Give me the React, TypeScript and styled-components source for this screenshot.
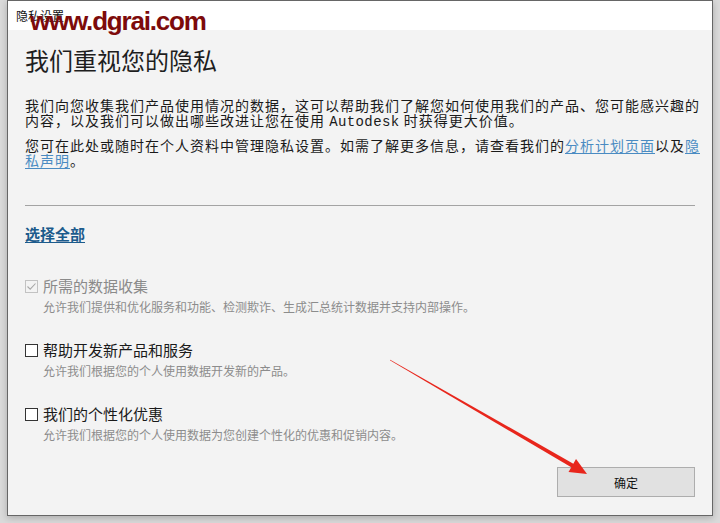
import React from "react";
import styled, { createGlobalStyle } from "styled-components";

const GlobalStyle = createGlobalStyle`
  html, body {
    margin: 0;
    padding: 0;
    background: #dadada;
    width: 720px;
    height: 523px;
    overflow: hidden;
  }
  body {
    font-family: "Noto Sans CJK SC", "Noto Sans", sans-serif;
  }
`;

const Page = styled.div`
  position: relative;
  width: 720px;
  height: 523px;
`;

const Window = styled.div`
  margin-left: 7px;
  width: 706px;
  height: 516px;
  box-sizing: border-box;
  border: 1px solid #666666;
  background: #f3f3f3;
  box-shadow: 0 2px 7px rgba(0, 0, 0, 0.22);
  display: flex;
  flex-direction: column;
`;

const TitleBar = styled.div`
  height: 29px;
  background: #ffffff;
  display: flex;
  align-items: center;
  padding-left: 8px;
  font-size: 12px;
  color: #111;
  line-height: 1;
`;

const Content = styled.div`
  flex: 1;
  display: flex;
  flex-direction: column;
  padding: 15px 17px 18px 17px;
`;

const Heading = styled.h1`
  margin: 0;
  font-size: 24px;
  line-height: 30px;
  font-weight: 400;
  color: #1e1e1e;
`;

const Para = styled.p<{ $gap: number }>`
  margin: ${(p) => p.$gap}px -9px 0 0;
  font-size: 14px;
  letter-spacing: 1px;
  line-height: 15px;
  color: #1a1a1a;
`;

const Mono = styled.span`
  font-family: "Liberation Mono", monospace;
  font-size: 14px;
  letter-spacing: 0.4px;
`;

const Link = styled.a`
  color: #4a8bc2;
  text-decoration: underline;
  text-underline-offset: 2px;
`;

const Divider = styled.hr`
  margin: 37px 0 0 0;
  border: 0;
  height: 1px;
  background: #a3a3a3;
`;

const SelectAll = styled.a`
  margin-top: 20px;
  align-self: flex-start;
  font-size: 15px;
  line-height: 16px;
  font-weight: 700;
  color: #1c5b8c;
  text-decoration: underline;
  text-underline-offset: 2px;
`;

const Options = styled.div`
  margin-top: 35px;
  display: flex;
  flex-direction: column;
  gap: 26px;
`;

const Option = styled.div`
  display: flex;
  flex-direction: column;
  gap: 4px;
`;

const OptionRow = styled.label`
  display: flex;
  align-items: center;
  gap: 5px;
  height: 18px;
`;

const Box = styled.span<{ $disabled?: boolean }>`
  width: 13px;
  height: 13px;
  box-sizing: border-box;
  border: 1px solid ${(p) => (p.$disabled ? "#c2c2c2" : "#333333")};
  background: ${(p) => (p.$disabled ? "#f3f3f3" : "#ffffff")};
  display: flex;
  align-items: center;
  justify-content: center;
  flex-shrink: 0;
`;

const OptionLabel = styled.span<{ $disabled?: boolean }>`
  font-size: 15px;
  line-height: 18px;
  color: ${(p) => (p.$disabled ? "#8a8a8a" : "#1a1a1a")};
`;

const OptionDesc = styled.div`
  padding-left: 18px;
  font-size: 12px;
  line-height: 16px;
  color: #8c8c8c;
`;

const Footer = styled.div`
  margin-top: auto;
  display: flex;
  justify-content: flex-end;
`;

const Button = styled.button`
  width: 138px;
  height: 30px;
  box-sizing: border-box;
  border: 1px solid #adadad;
  background: #e1e1e1;
  font-family: "Noto Sans CJK SC", sans-serif;
  font-size: 12px;
  color: #111;
  padding: 0;
`;

const Watermark = styled.div`
  position: absolute;
  left: 30px;
  top: 6px;
  font-family: "Liberation Sans", Arial, sans-serif;
  font-weight: 700;
  font-size: 26px;
  line-height: 30px;
  color: #7d0b0b;
  letter-spacing: -1.2px;
  pointer-events: none;
`;

const Overlay = styled.svg`
  position: absolute;
  left: 0;
  top: 0;
  pointer-events: none;
`;

type Opt = { label: string; desc: string; disabled?: boolean; checked?: boolean };

const options: Opt[] = [
  {
    label: "所需的数据收集",
    desc: "允许我们提供和优化服务和功能、检测欺诈、生成汇总统计数据并支持内部操作。",
    disabled: true,
    checked: true,
  },
  {
    label: "帮助开发新产品和服务",
    desc: "允许我们根据您的个人使用数据开发新的产品。",
  },
  {
    label: "我们的个性化优惠",
    desc: "允许我们根据您的个人使用数据为您创建个性化的优惠和促销内容。",
  },
];

function Arrow() {
  const sx = 390, sy = 360;
  const tx = 587, ty = 474;
  const dx = tx - sx, dy = ty - sy;
  const len = Math.hypot(dx, dy);
  const ux = dx / len, uy = dy / len;
  const px = -uy, py = ux;
  const headLen = 17;
  const bx = tx - ux * headLen, by = ty - uy * headLen;
  const ex = bx + ux * 2, ey = by + uy * 2;
  const w0 = 0.3, w1 = 2.1, hw = 7.5;
  const shaft = [
    [sx + px * w0, sy + py * w0],
    [ex + px * w1, ey + py * w1],
    [ex - px * w1, ey - py * w1],
    [sx - px * w0, sy - py * w0],
  ]
    .map((p) => p.join(","))
    .join(" ");
  const head = [
    [tx, ty],
    [bx + px * hw, by + py * hw],
    [bx - px * hw, by - py * hw],
  ]
    .map((p) => p.join(","))
    .join(" ");
  return (
    <Overlay width={720} height={523} viewBox="0 0 720 523">
      <polygon points={shaft} fill="#e8261c" />
      <polygon points={head} fill="#e8261c" />
    </Overlay>
  );
}

export default function App() {
  return (
    <Page>
      <GlobalStyle />
      <Window>
        <TitleBar>隐私设置</TitleBar>
        <Content>
          <Heading>我们重视您的隐私</Heading>
          <Para $gap={23}>
            我们向您收集我们产品使用情况的数据，这可以帮助我们了解您如何使用我们的产品、您可能感兴趣的内容，以及我们可以做出哪些改进让您在使用 <Mono>Autodesk</Mono> 时获得更大价值。
          </Para>
          <Para $gap={8}>
            您可在此处或随时在个人资料中管理隐私设置。如需了解更多信息，请查看我们的<Link>分析计划页面</Link>以及<Link>隐私声明</Link>。
          </Para>
          <Divider />
          <SelectAll>选择全部</SelectAll>
          <Options>
            {options.map((o) => (
              <Option key={o.label}>
                <OptionRow>
                  <Box $disabled={o.disabled}>
                    {o.checked && (
                      <svg width="11" height="11" viewBox="0 0 11 11">
                        <polyline
                          points="1.5,5.5 4.2,8.2 9.5,2.5"
                          fill="none"
                          stroke="#a8a8a8"
                          strokeWidth="1.1"
                        />
                      </svg>
                    )}
                  </Box>
                  <OptionLabel $disabled={o.disabled}>{o.label}</OptionLabel>
                </OptionRow>
                <OptionDesc>{o.desc}</OptionDesc>
              </Option>
            ))}
          </Options>
          <Footer>
            <Button>确定</Button>
          </Footer>
        </Content>
      </Window>
      <Watermark>www.dgrai.com</Watermark>
      <Arrow />
    </Page>
  );
}
